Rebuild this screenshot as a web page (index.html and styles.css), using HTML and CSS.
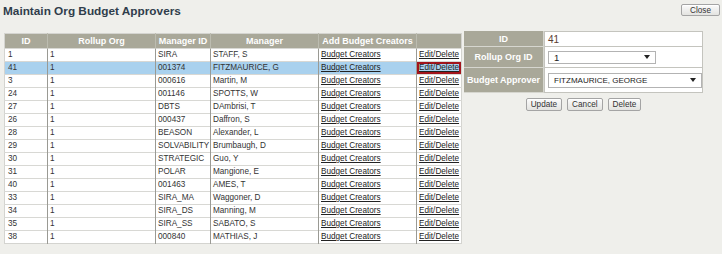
FILE: index.html
```html
<!DOCTYPE html>
<html>
<head>
<meta charset="utf-8">
<link rel="stylesheet" href="styles.css">
</head>
<body>
<div class="page">
  <div class="topbar">
    <h1 class="title">Maintain Org Budget Approvers</h1>
    <button class="btn btn-close">Close</button>
  </div>
  <div class="main">
    <table class="grid">
      <colgroup>
        <col class="c-id"><col class="c-roll"><col class="c-mid"><col class="c-mgr"><col class="c-add"><col class="c-edit">
      </colgroup>
      <thead>
        <tr><th>ID</th><th>Rollup Org</th><th>Manager ID</th><th>Manager</th><th>Add Budget Creators</th><th></th></tr>
      </thead>
      <tbody>
        <tr><td>1</td><td>1</td><td>SIRA</td><td>STAFF, S</td><td><a href="#">Budget Creators</a></td><td><a href="#">Edit/Delete</a></td></tr>
        <tr class="selected"><td>41</td><td>1</td><td>001374</td><td>FITZMAURICE, G</td><td><a href="#">Budget Creators</a></td><td class="active"><a href="#">Edit/Delete</a></td></tr>
        <tr><td>3</td><td>1</td><td>000616</td><td>Martin, M</td><td><a href="#">Budget Creators</a></td><td><a href="#">Edit/Delete</a></td></tr>
        <tr><td>24</td><td>1</td><td>001146</td><td>SPOTTS, W</td><td><a href="#">Budget Creators</a></td><td><a href="#">Edit/Delete</a></td></tr>
        <tr><td>27</td><td>1</td><td>DBTS</td><td>DAmbrisi, T</td><td><a href="#">Budget Creators</a></td><td><a href="#">Edit/Delete</a></td></tr>
        <tr><td>26</td><td>1</td><td>000437</td><td>Daffron, S</td><td><a href="#">Budget Creators</a></td><td><a href="#">Edit/Delete</a></td></tr>
        <tr><td>28</td><td>1</td><td>BEASON</td><td>Alexander, L</td><td><a href="#">Budget Creators</a></td><td><a href="#">Edit/Delete</a></td></tr>
        <tr><td>29</td><td>1</td><td>SOLVABILITY</td><td>Brumbaugh, D</td><td><a href="#">Budget Creators</a></td><td><a href="#">Edit/Delete</a></td></tr>
        <tr><td>30</td><td>1</td><td>STRATEGIC</td><td>Guo, Y</td><td><a href="#">Budget Creators</a></td><td><a href="#">Edit/Delete</a></td></tr>
        <tr><td>31</td><td>1</td><td>POLAR</td><td>Mangione, E</td><td><a href="#">Budget Creators</a></td><td><a href="#">Edit/Delete</a></td></tr>
        <tr><td>40</td><td>1</td><td>001463</td><td>AMES, T</td><td><a href="#">Budget Creators</a></td><td><a href="#">Edit/Delete</a></td></tr>
        <tr><td>33</td><td>1</td><td>SIRA_MA</td><td>Waggoner, D</td><td><a href="#">Budget Creators</a></td><td><a href="#">Edit/Delete</a></td></tr>
        <tr><td>34</td><td>1</td><td>SIRA_DS</td><td>Manning, M</td><td><a href="#">Budget Creators</a></td><td><a href="#">Edit/Delete</a></td></tr>
        <tr><td>35</td><td>1</td><td>SIRA_SS</td><td>SABATO, S</td><td><a href="#">Budget Creators</a></td><td><a href="#">Edit/Delete</a></td></tr>
        <tr><td>38</td><td>1</td><td>000840</td><td>MATHIAS, J</td><td><a href="#">Budget Creators</a></td><td><a href="#">Edit/Delete</a></td></tr>
      </tbody>
    </table>
    <div class="editor">
      <table class="form">
        <tr class="r-id"><th>ID</th><td><span class="val">41</span></td></tr>
        <tr class="r-roll"><th>Rollup Org ID</th><td><div class="select sel-roll"><span>1</span><span class="arrow"></span></div></td></tr>
        <tr class="r-appr"><th>Budget Approver</th><td><div class="select sel-appr"><span>FITZMAURICE, GEORGE</span><span class="arrow"></span></div></td></tr>
      </table>
      <div class="actions">
        <button class="btn">Update</button>
        <button class="btn">Cancel</button>
        <button class="btn">Delete</button>
      </div>
    </div>
  </div>
</div>
</body>
</html>
```
FILE: styles.css
```css
html, body {
  margin: 0;
  padding: 0;
  background: #efefeb;
}
body {
  font-family: "Liberation Sans", Arial, sans-serif;
  color: #333;
}
.page {
  width: 722px;
  height: 254px;
  overflow: hidden;
}
.topbar {
  display: flex;
  justify-content: space-between;
  align-items: flex-start;
  height: 31px;
}
.title {
  margin: 4px 0 0 3px;
  font-size: 11.8px;
  line-height: 14px;
  font-weight: bold;
  color: #2f3d4b;
}
.btn {
  font-family: "Liberation Sans", Arial, sans-serif;
  font-size: 8.2px;
  color: #333;
  height: 13px;
  line-height: 11px;
  padding: 0 4px;
  border: 1px solid #a4a4a4;
  border-radius: 2px;
  background: linear-gradient(#fbfbfb, #e3e3e0);
  box-shadow: inset 0 1px 0 #fff;
}
.btn-close {
  margin: 4px 2px 0 0;
  width: 39px;
  height: 12px;
  padding: 0;
}
.main {
  display: flex;
  align-items: flex-start;
}
.grid {
  margin: 2px 0 0 4px;
  border-collapse: collapse;
  table-layout: fixed;
  width: 457px;
  font-size: 8.2px;
  border: 1px solid #d4d4d0;
}
.c-id { width: 43px; }
.c-roll { width: 108px; }
.c-mid { width: 55px; }
.c-mgr { width: 108px; }
.c-add { width: 98px; }
.c-edit { width: 45px; }
.grid th {
  background: #a9a899;
  color: #fff;
  font-weight: bold;
  font-size: 9px;
  height: 14px;
  padding: 0;
  border-left: 1px solid #bcbcb0;
  text-align: center;
  white-space: nowrap;
}
.grid th:first-child { border-left: none; }
.grid td {
  background: #fff;
  height: 12px;
  padding: 0 1px 0 2px;
  line-height: 12px;
  border-left: 1px solid #9a9a94;
  border-top: 1px solid #d8d8d4;
  white-space: nowrap;
  overflow: hidden;
}
.grid td:first-child { border-left: none; padding-left: 3px; }
.grid a {
  color: #222;
  text-decoration: underline;
}
.grid tr.selected td {
  background: #a9d1ee;
}
.grid td.active {
  box-shadow: inset 0 0 0 2px #a3141b;
}
.editor {
  margin-left: 2px;
  display: flex;
  flex-direction: column;
  align-items: stretch;
  width: 239px;
}
.form {
  border-collapse: separate;
  border-spacing: 0;
  width: 239px;
  table-layout: fixed;
}
.form th {
  width: 79px;
  background: #a9a899;
  color: #fff;
  font-weight: bold;
  font-size: 9px;
  text-align: center;
  padding: 0;
  white-space: nowrap;
  border-bottom: 1px solid #d6d6cf;
  border-right: 1px solid #d6d6cf;
}
.form td {
  background: #fff;
  border: 1px solid #c4c4be;
  border-top: none;
  padding: 0 0 0 3px;
  font-size: 9px;
}
.form tr.r-id td { border-top: 1px solid #c4c4be; }
.r-id th, .r-id td { height: 14px; }
.r-roll th, .r-roll td { height: 20px; }
.r-appr th, .r-appr td { height: 24px; }
.val {
  color: #5a3e33;
  font-size: 10px;
}
.select {
  display: flex;
  align-items: center;
  justify-content: space-between;
  background: #fff;
  border: 1px solid #b3b3b3;
  height: 13px;
  padding: 0 5px 0 5px;
  box-sizing: border-box;
  color: #222;
}
.sel-roll {
  width: 108px;
  font-size: 9.5px;
}
.sel-appr {
  width: 154px;
  height: 15px;
  font-size: 8px;
}
.arrow {
  width: 0;
  height: 0;
  border-left: 3px solid transparent;
  border-right: 3px solid transparent;
  border-top: 4px solid #222;
}
.actions {
  display: flex;
  justify-content: center;
  gap: 5px;
  margin-top: 5px;
}
```
